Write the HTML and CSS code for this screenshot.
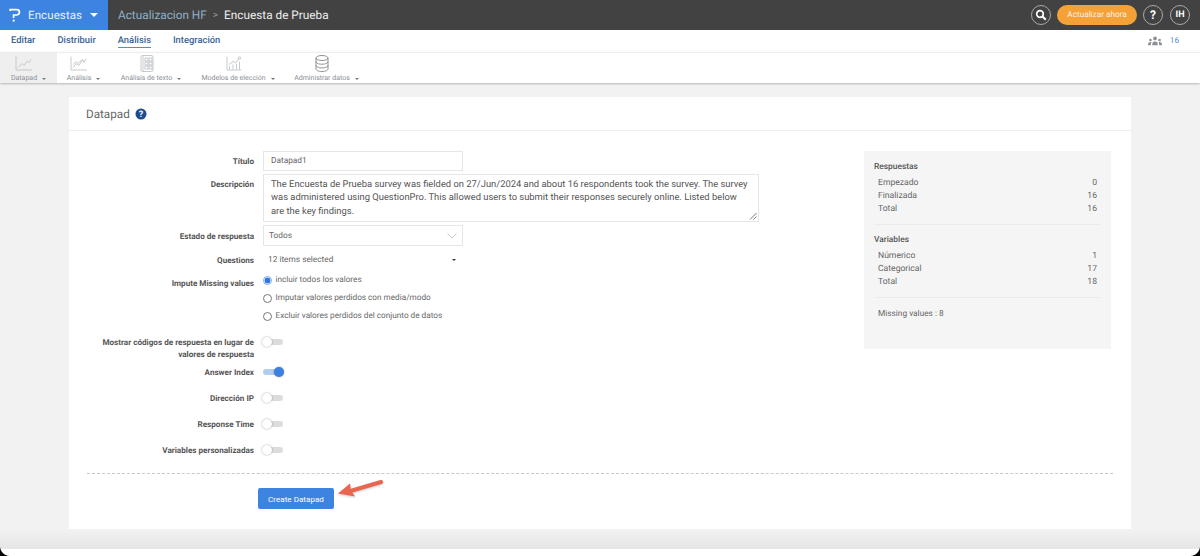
FILE: index.html
```html
<!DOCTYPE html>
<html lang="es">
<head>
<meta charset="utf-8">
<title>Datapad</title>
<link rel="stylesheet" href="styles.css">
</head>
<body>
<header class="topbar">
  <div class="brand">
    <svg class="logo" width="12" height="16" viewBox="0 0 12 16"><path d="M1.2 4V2.6h6.6a2.6 2.6 0 0 1 2.6 2.6v0a2.8 2.8 0 0 1-2.8 2.8H4.6v3" fill="none" stroke="#fff" stroke-width="1.7"/><rect x="3.7" y="12.6" width="1.9" height="2" fill="#fff"/></svg>
    <span class="brand-name">Encuestas</span>
    <span class="caret-white"></span>
  </div>
  <nav class="crumbs">
    <span class="crumb-link">Actualizacion HF</span>
    <span class="crumb-sep">&gt;</span>
    <span class="crumb-cur">Encuesta de Prueba</span>
  </nav>
  <div class="top-actions">
    <span class="circle"><svg width="12" height="12" viewBox="0 0 12 12"><circle cx="5" cy="5" r="3.3" fill="none" stroke="#fff" stroke-width="1.7"/><path d="M7.5 7.5l3.3 3.3" stroke="#fff" stroke-width="2"/></svg></span>
    <span class="upgrade">Actualizar ahora</span>
    <span class="circle strong">?</span>
    <span class="circle strong small">IH</span>
  </div>
</header>

<div class="tabs">
  <a class="tab">Editar</a>
  <a class="tab">Distribuir</a>
  <a class="tab active">Análisis</a>
  <a class="tab">Integración</a>
  <div class="tabs-right">
    <svg width="14" height="10" viewBox="0 0 15 10" fill="#8a8f96"><circle cx="7.5" cy="2.2" r="2"/><path d="M4.5 9.5c0-3 1-4 3-4s3 1 3 4z"/><circle cx="2.6" cy="4" r="1.4"/><path d="M0 9.5c0-2.4.8-3.3 2.6-3.3.4 0 .8.1 1.1.2-.5.8-.7 1.8-.7 3.1z"/><circle cx="12.4" cy="4" r="1.4"/><path d="M15 9.5c0-2.4-.8-3.3-2.6-3.3-.4 0-.8.1-1.1.2.5.8.7 1.8.7 3.1z"/></svg>
    <span class="count">16</span>
  </div>
</div>

<div class="toolbar">
  <div class="tool selected">
    <svg class="tool-icon" width="18" height="16" viewBox="0 0 18 16"><path d="M1 1v13.5h16" /><path d="M3 12l4-4 2 2 3-4 2 1 2-3" /></svg>
    <span class="tool-label">Datapad<i class="caret"></i></span>
  </div>
  <div class="tool">
    <svg class="tool-icon" width="18" height="16" viewBox="0 0 18 16"><path d="M1 1v13.5h16" /><path d="M3 12l3-4 3 2 3-5 2 2 2-4" /><path d="M3 9l3-3 2 2 4-4 2 1" /></svg>
    <span class="tool-label">Análisis<i class="caret"></i></span>
  </div>
  <div class="tool">
    <svg class="tool-icon" width="14" height="17" viewBox="0 0 14 17"><rect x="1" y=".5" width="12" height="16" rx="1.5"/><path d="M3 .5v16"/><rect x="5" y="3" width="3" height="3"/><rect x="9" y="3" width="3" height="3"/><rect x="5" y="7" width="3" height="3"/><rect x="9" y="7" width="3" height="3"/><rect x="5" y="11" width="3" height="3"/><rect x="9" y="11" width="3" height="3"/></svg>
    <span class="tool-label">Análisis de texto<i class="caret"></i></span>
  </div>
  <div class="tool">
    <svg class="tool-icon" width="16" height="16" viewBox="0 0 16 16"><path d="M1 1v13.5h14.5" /><path d="M3.500 14v-3M7 14V9M10.500 14V8M13.500 14V6" /><path d="M3 9l4-3 3 1 3-4" /><circle cx="13.500" cy="2.500" r="1.200"/></svg>
    <span class="tool-label">Modelos de elección<i class="caret"></i></span>
  </div>
  <div class="tool">
    <svg class="tool-icon dark" width="14" height="17" viewBox="0 0 14 17"><ellipse cx="7" cy="3" rx="6" ry="2.500"/><path d="M1 3v11c0 1.400 2.700 2.500 6 2.500s6-1.100 6-2.500V3"/><path d="M1 6.700c0 1.400 2.700 2.500 6 2.500s6-1.100 6-2.500M1 10.400c0 1.400 2.700 2.500 6 2.500s6-1.100 6-2.500"/></svg>
    <span class="tool-label">Administrar datos<i class="caret"></i></span>
  </div>
</div>

<main class="page">
  <section class="card">
    <div class="card-head">
      <h1>Datapad</h1>
      <svg width="12" height="12" viewBox="0 0 12 12"><circle cx="6" cy="6" r="5.500" fill="#1d4d8f"/><text x="6" y="9" text-anchor="middle" class="help-glyph">?</text></svg>
    </div>
    <div class="card-body">
      <form class="form">
        <div class="row r-title">
          <label class="lbl">Título</label>
          <div class="input w200">Datapad1</div>
        </div>
        <div class="row r-desc">
          <label class="lbl">Descripción</label>
          <div class="textarea">The Encuesta de Prueba survey was fielded on 27/Jun/2024 and about 16 respondents took the survey. The survey was administered using QuestionPro. This allowed users to submit their responses securely online. Listed below are the key findings.
            <svg class="grip" width="8" height="8" viewBox="0 0 8 8"><path d="M7.500 1L1 7.500M7.500 4.500L4.500 7.500" stroke="#777" fill="none"/></svg>
          </div>
        </div>
        <div class="row r-state">
          <label class="lbl">Estado de respuesta</label>
          <div class="input select w200"><span>Todos</span><svg width="10" height="6" viewBox="0 0 10 6"><path d="M.5.500L5 5 9.500.500" fill="none" stroke="#c4c8cc"/></svg></div>
        </div>
        <div class="row r-q">
          <label class="lbl">Questions</label>
          <div class="multi w200"><span>12 items selected</span><i class="caret dark-caret"></i></div>
        </div>
        <div class="row r-impute">
          <label class="lbl">Impute Missing values</label>
          <div class="radios">
            <div class="radio-row"><span class="radio on"></span>incluir todos los valores</div>
            <div class="radio-row"><span class="radio"></span>Imputar valores perdidos con media/modo</div>
            <div class="radio-row"><span class="radio"></span>Excluir valores perdidos del conjunto de datos</div>
          </div>
        </div>
        <div class="row r-sw first"><label class="lbl">Mostrar códigos de respuesta en lugar de valores de respuesta</label><span class="switch"></span></div>
        <div class="row r-sw idx"><label class="lbl">Answer Index</label><span class="switch on"></span></div>
        <div class="row r-sw"><label class="lbl">Dirección IP</label><span class="switch"></span></div>
        <div class="row r-sw"><label class="lbl">Response Time</label><span class="switch"></span></div>
        <div class="row r-sw"><label class="lbl">Variables personalizadas</label><span class="switch"></span></div>
      </form>
      <aside class="stats">
        <h2>Respuestas</h2>
        <dl>
          <div><dt>Empezado</dt><dd>0</dd></div>
          <div><dt>Finalizada</dt><dd>16</dd></div>
          <div><dt>Total</dt><dd>16</dd></div>
        </dl>
        <hr>
        <h2>Variables</h2>
        <dl>
          <div><dt>Númerico</dt><dd>1</dd></div>
          <div><dt>Categorical</dt><dd>17</dd></div>
          <div><dt>Total</dt><dd>18</dd></div>
        </dl>
        <hr>
        <p class="missing">Missing values : 8</p>
      </aside>
    </div>
    <div class="card-foot">
      <button class="primary" type="button">Create Datapad</button>
      <svg class="arrow" width="50" height="24" viewBox="0 0 50 24"><path d="M44 5L10 15" stroke="#e8664f" stroke-width="4" stroke-linecap="round" fill="none"/><path d="M1 16.500L13 6.500l1 7 4 6z" fill="#e8664f"/></svg>
    </div>
  </section>
</main>
<div class="window-edge"></div>
</body>
</html>
```
FILE: styles.css
```css
* { box-sizing: border-box; }
html, body { margin: 0; height: 100%; }
body {
  width: 1200px;
  height: 556px;
  overflow: hidden;
  background: #f2f2f2;
  font-family: Roboto, "Noto Sans", "Liberation Sans", sans-serif;
  color: #555;
  font-size: 8.5px;
  text-rendering: geometricPrecision;
  position: relative;
}
.topbar { display: flex; height: 30px; background: #424242; align-items: stretch; }
.brand { width: 108px; background: #3d84e0; display: flex; align-items: center; padding-left: 9px; color: #fff; }
.logo { flex: none; }
.brand-name { font-size: 11.500px; margin-left: 7px; color: #e8f0fb; letter-spacing: .1px; width: 54px; }
.caret-white { margin-left: 8px; width: 0; height: 0; border: 4px solid transparent; border-top: 4px solid #fff; border-bottom: 0; }
.crumbs { display: flex; align-items: center; padding-left: 10px; font-size: 11.800px; }
.crumb-link { color: #8fb0c9; }
.crumb-sep { margin: 0 6px; color: #999; font-size: 10px; }
.crumb-cur { color: #eee; }
.top-actions { margin-left: auto; display: flex; align-items: center; padding-right: 10px; gap: 6px; }
.circle { width: 20px; height: 20px; border: 1px solid #aaa; border-radius: 50%; display: flex; align-items: center; justify-content: center; color: #fff; }
.circle.strong { font-weight: 700; font-size: 12px; }
.circle.small { font-size: 9px; margin-left: 1px; }
.upgrade { width: 80px; height: 20px; border-radius: 10px; background: #f4a138; color: #fdf3e4; font-size: 8.200px; display: flex; align-items: center; justify-content: center; }

.tabs { display: flex; align-items: center; height: 22px; background: #fff; padding-left: 11px; gap: 22px; }
.tab { font-size: 9.400px; font-weight: 500; color: #3a6399; line-height: 12px; position: relative; }
.tab.active { border-bottom: 1px solid #4a90d9; }
.tabs-right { margin-left: auto; display: flex; align-items: center; gap: 8px; padding-right: 21px; }
.count { color: #4a90d9; font-size: 8.200px; }

.toolbar { display: flex; height: 31px; background: #fff; border-top: 1px solid #eee; box-shadow: 0 1px 2px rgba(0,0,0,.25); position: relative; }
.tool { display: flex; flex-direction: column; align-items: center; justify-content: flex-start; padding: 2px 0 0; }
.tool:nth-child(1) { width: 57px; }
.tool:nth-child(2) { width: 53px; }
.tool:nth-child(3) { width: 82px; }
.tool:nth-child(4) { width: 92px; }
.tool:nth-child(5) { width: 85px; }
.tool.selected { background: #efefef; }
.tool-icon { fill: none; stroke: #b9bdc1; stroke-width: .8; height: 17px; margin-right: 9px; }
.tool-icon.dark { stroke: #777; }
.tool-label { font-size: 7px; color: #8a8f96; margin-top: .5px; line-height: 10px; white-space: nowrap; display: flex; align-items: center; }
.caret { display: inline-block; width: 0; height: 0; border: 2.500px solid transparent; border-top: 2.500px solid #777; border-bottom: 0; margin-left: 5px; margin-top: 2px; }

.page { padding: 14px 69px 0; }
.card { background: #fff; height: 432px; }
.card-head { height: 34px; display: flex; align-items: center; gap: 5px; padding-left: 17px; border-bottom: 1px solid #eee; }
h1 { margin: 0; font-size: 11.700px; font-weight: 400; color: #666; }
.help-glyph { font-size: 9px; font-weight: 700; fill: #fff; font-family: Roboto, sans-serif; }

.card-body { display: flex; height: 342px; position: relative; }
.form { width: 795px; padding-top: 20px; }
.row { display: flex; align-items: flex-start; }
.lbl { width: 185px; padding-left: 29px; margin-right: 9px; text-align: right; font-weight: 700; color: #555; font-size: 8.150px; line-height: 12px; flex: none; }
.input { height: 20px; border: 1px solid #e6e6e6; padding-left: 7px; display: flex; align-items: center; color: #666; font-size: 8.300px; }
.w200 { width: 200px; }
.r-title .lbl { padding-top: 4px; }
.r-desc { margin-top: 3px; }
.r-desc .lbl { padding-top: 4px; }
.textarea { position: relative; width: 496px; height: 48px; border: 1px solid #e6e6e6; padding: 3px 7px; font-size: 9.400px; line-height: 13.300px; color: #555; }
.grip { position: absolute; right: 1px; bottom: 1px; }
.r-state { margin-top: 3px; }
.r-state .lbl { padding-top: 5px; }
.select { justify-content: space-between; padding: 0 5px 0 5px; height: 21px; }
.r-q { margin-top: 8px; height: 12px; align-items: center; }
.multi { display: flex; align-items: center; justify-content: space-between; padding: 0 7px 0 5px; font-size: 8.300px; color: #666; }
.dark-caret { border-top-color: #333; margin: 0; }
.r-impute { margin-top: 8px; }
.r-impute .lbl { padding-top: 3px; }
.radios { display: flex; flex-direction: column; gap: 6px; }
.radio-row { display: flex; align-items: center; height: 12px; font-size: 8.200px; color: #666; gap: 3.500px; }
.radio { width: 9px; height: 9px; border: 1px solid #777; border-radius: 50%; background: #fff; flex: none; }
.radio.on { border-color: #7aa9e6; background: radial-gradient(circle, #2f74e0 0 2.700px, #fff 3.200px); }
.r-sw { margin-top: 14px; min-height: 12px; }
.r-sw.first { margin-top: 14px; }
.r-sw.idx { margin-top: 6px; }
.switch { position: relative; display: block; width: 20px; height: 6px; margin-top: 3px; border-radius: 3px; background: #dcdcdc; flex: none; }
.switch::after { content: ""; position: absolute; left: -1px; top: -2px; width: 10px; height: 10px; border-radius: 50%; background: #fff; box-shadow: 0 0 2px rgba(0,0,0,.4); }
.switch.on { background: #b3cdf0; }
.switch.on::after { left: auto; right: -1px; background: #3b7fe0; }

.stats { position: absolute; top: 20px; left: 795px; width: 247px; height: 198px; background: #f5f5f5; padding: 11px 10px 10px; color: #666; }
.stats h2 { margin: 0 0 4px; font-size: 8.400px; line-height: 11px; color: #555; font-weight: 500; }
.stats dl { margin: 0; padding: 0 4px; }
.stats dl div { display: flex; justify-content: space-between; height: 12.700px; align-items: center; font-size: 8.600px; }
.stats dd { margin: 0; }
.stats hr { margin: 9px 0 10px; border: 0; border-top: 1px solid #ebebeb; }
.missing { margin: 0; padding: 1px 4px 0; font-size: 8.300px; }

.card-foot { margin: 0 18px; border-top: 1px dashed #c8c8c8; padding: 14px 0 0 171px; display: flex; align-items: flex-start; position: relative; }
.primary { width: 76px; height: 21px; background: #3d84e0; border: 0; border-radius: 2px; color: #fff; font: 8.100px Roboto, sans-serif; padding: 0; }
.arrow { position: absolute; left: 250px; top: 3px; filter: drop-shadow(0 1px 1px rgba(0,0,0,.2)); }

.window-edge { position: absolute; left: 0; right: 0; bottom: 0; height: 27px; background: linear-gradient(#f2f2f2, #e6e6e6 20px, #fff 20px); z-index: -1; }
.window-edge::before, .window-edge::after { content: ""; position: absolute; bottom: 0; width: 10px; height: 10px; }
.window-edge::before { left: 0; background: radial-gradient(circle at 10px 0, transparent 9.500px, #000 10.500px); }
.window-edge::after { right: 0; background: radial-gradient(circle at 0 0, transparent 9.500px, #000 10.500px); }
```
